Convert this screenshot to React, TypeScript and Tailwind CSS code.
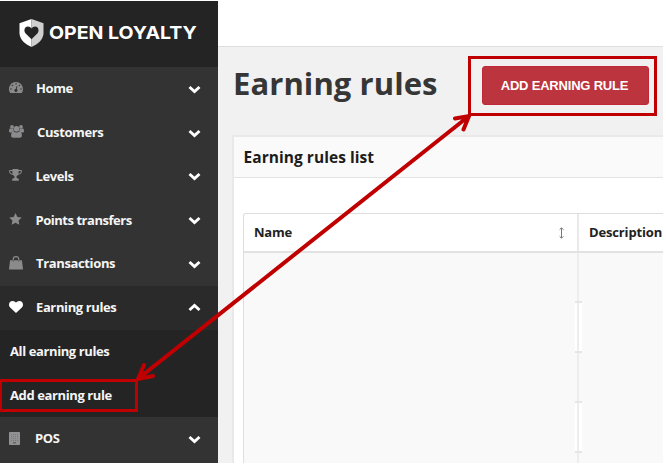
import React from "react";

type IconProps = { className?: string };

const Dashboard = () => (
  <svg width="14" height="12" viewBox="0 0 14 12" fill="#8b8b8d">
    <path
      fillRule="evenodd"
      d="M7 0a7 7 0 0 1 7 7c0 1.400-.4 2.700-1.100 3.800-.1.200-.2.200-.4.200H1.500c-.2 0-.3 0-.4-.2A7 7 0 0 1 7 0ZM7 1.200a.8.800 0 1 0 0 1.600.8.800 0 0 0 0-1.600ZM3.500 2.700a.8.800 0 1 0 0 1.600.8.800 0 0 0 0-1.600ZM10.500 2.700a.8.800 0 1 0 0 1.600.8.800 0 0 0 0-1.600ZM2 6.200a.8.800 0 1 0 0 1.600.8.800 0 0 0 0-1.600ZM12 6.200a.8.800 0 1 0 0 1.600.8.800 0 0 0 0-1.600ZM7.600 4l-.8 3a1.500 1.500 0 1 0 .9.200l.8-2.900Z"
    />
  </svg>
);

const Group = () => (
  <svg width="15" height="13" viewBox="0 0 15 13" fill="#8b8b8d">
    <circle cx="3" cy="1.900" r="1.900" />
    <circle cx="12" cy="1.900" r="1.900" />
    <circle cx="7.500" cy="3.800" r="2.900" />
    <path d="M1.200 3.400 3 4l1.200-.2c0 1.200.3 2 .9 2.700-.9 0-1.600.4-2.200 1H1.500C.6 7.500 0 7.100 0 6.300 0 5.200.2 3.400 1.200 3.400ZM13.800 3.400 12 4l-1.200-.2c0 1.200-.3 2-.9 2.700.9 0 1.600.4 2.200 1h1.400c.9 0 1.500-.4 1.500-1.200 0-1.100-.2-2.900-1.200-2.900Z" />
    <path d="M4.700 6.600c.8.700 1.700 1 2.800 1s2-.3 2.800-1c1.900 0 2.600 1.900 2.600 4.100 0 1.200-.8 2-2 2H4.100c-1.200 0-2-.8-2-2 0-2.200.7-4.100 2.600-4.100Z" />
  </svg>
);

const Trophy = () => (
  <svg width="13" height="12" viewBox="0 0 13 12" fill="#8b8b8d">
    <path
      fillRule="evenodd"
      d="M3.400 1V.8c0-.5.400-.8.800-.8h4.600c.4 0 .8.300.8.800V1h2.600c.4 0 .7.300.7.700v.9c0 1.700-1.800 3.300-4 3.400-.4.600-.9.900-1.300 1.100v1.900c.9.200 2.200.6 2.200 1.400v1c0 .2-.1.300-.3.300H3.500c-.2 0-.3-.1-.3-.3v-1c0-.8 1.300-1.200 2.200-1.400V7.100C5 6.900 4.500 6.600 4.100 6 1.900 5.900.1 4.300.1 2.600v-.9c0-.4.300-.7.700-.7ZM1.100 2v.6c0 1 1.100 2 2.500 2.300-.2-.8-.3-1.800-.3-2.900ZM9.700 2c0 1.100-.1 2.100-.3 2.900 1.400-.3 2.500-1.300 2.500-2.300V2Z"
    />
  </svg>
);

const Star = () => (
  <svg width="13" height="12" viewBox="0 0 13 12" fill="#8b8b8d">
    <path d="m6.500 0 1.900 3.900 4.300.6-3.100 3 .7 4.300-3.800-2-3.800 2 .7-4.300-3.100-3 4.300-.6Z" />
  </svg>
);

const Bag = () => (
  <svg width="14" height="14" viewBox="0 0 14 14">
    <path d="M4.200 4.500V3.400a2.800 2.800 0 0 1 5.600 0v1.100" fill="none" stroke="#8b8b8d" strokeWidth="1.100" />
    <path fill="#8b8b8d" d="M1.100 4.200h11.800l1.100 8.700c0 .3-.2.600-.5.600H.5c-.3 0-.5-.3-.5-.6Z" />
    <path d="M4.200 4.200v1.600M9.800 4.200v1.600" stroke="#5c5c5e" strokeWidth="1" />
  </svg>
);

const Heart = () => (
  <svg width="14" height="12" viewBox="0 0 14 12" fill="#fff">
    <path d="M7 12 1.400 6.700C.5 5.900 0 4.900 0 3.700 0 1.400 1.400 0 3.700 0 5.100 0 6.300.9 7 1.700 7.700.9 8.900 0 10.300 0 12.600 0 14 1.400 14 3.700c0 1.200-.5 2.200-1.400 3Z" />
  </svg>
);

const Building = () => (
  <svg width="11" height="13" viewBox="0 0 11 13">
    <rect width="11" height="13" rx=".7" fill="#919193" />
    <g fill="#78787a">
      {[2, 4, 6, 8].map((y) =>
        [2, 4, 6, 8].map((x) => <rect key={`${x}-${y}`} x={x} y={y} width="1" height="1" />),
      )}
      <rect x="4" y="10" width="3" height="1.500" fill="#666668" />
    </g>
  </svg>
);

const Chevron = ({ className }: IconProps) => (
  <svg width="13" height="9" viewBox="0 0 13 9" className={className}>
    <path d="m1.500 2 5 4.600L11.500 2" fill="none" stroke="#fff" strokeWidth="2.900" />
  </svg>
);

const SortIcon = () => (
  <svg width="7" height="12" viewBox="0 0 7 12" fill="none" stroke="#747a78">
    <path d="M3.500 1v10M1.600 2.700l1.900-1.900 1.900 1.900M1.600 9.300l1.900 1.900 1.900-1.900" />
  </svg>
);

const Shield = () => (
  <svg width="25" height="28" viewBox="0 0 25 28">
    <path d="M12.500 0 .5 4.200v10.500C1 20.500 5.700 25 12.500 28Z" fill="#fff" />
    <path d="m12.500 0 12 4.200v10.500c-.5 5.800-5.200 10.300-12 13.300Z" fill="#cfcfcf" />
    <path
      d="M12.500 20.300 6.900 14.800c-2.700-2.700-1.500-7.300 2-7.300 1.500 0 2.800.7 3.600 2 .8-1.300 2.100-2 3.600-2 3.500 0 4.700 4.600 2 7.300Z"
      fill="#242424"
    />
  </svg>
);

const items = [
  { label: "Home", icon: <Dashboard />, gap: "pl-[36px]", tracking: "tracking-[-0.4px]" },
  { label: "Customers", icon: <Group />, gap: "pl-[37px]", tracking: "tracking-[-0.38px]" },
  { label: "Levels", icon: <Trophy />, gap: "pl-[35.5px]", tracking: "tracking-[-0.4px]" },
  { label: "Points transfers", icon: <Star />, gap: "pl-[35.5px]", tracking: "tracking-[-0.47px]" },
  { label: "Transactions", icon: <Bag />, gap: "pl-[36px]", tracking: "tracking-[-0.36px]" },
];

function MenuRow({
  label,
  icon,
  gap,
  tracking,
  open,
}: {
  label: string;
  icon: React.ReactNode;
  gap: string;
  tracking: string;
  open?: boolean;
}) {
  return (
    <div className={`relative flex h-[43.8px] shrink-0 items-center ${gap} ${open ? "bg-[#2a2a2a]" : ""}`}>
      <span className="absolute left-[9px] flex h-full items-center pb-[2px]">{icon}</span>
      <span className={`whitespace-nowrap text-[13px] ${tracking}`}>{label}</span>
      <Chevron className={`mr-[17.5px] ml-auto ${open ? "rotate-180" : "mt-px"}`} />
    </div>
  );
}

export default function App() {
  return (
    <div className="relative h-[464px] w-[666px] overflow-hidden bg-white font-['Open_Sans','Noto_Sans',sans-serif] text-[#222]">
      <div className="flex h-[463px] w-[663px] overflow-hidden">
        <aside className="mt-px flex w-[218px] shrink-0 flex-col bg-[#333] font-bold text-[#f5f5f5]">
          <div className="flex h-[66px] shrink-0 items-center gap-[5px] bg-[#242424] pb-[2px] pl-[19px]">
            <Shield />
            <span className="origin-left scale-x-[1.085] whitespace-nowrap font-['Inter',sans-serif] text-[18px] font-bold leading-none text-white">
              OPEN LOYALTY
            </span>
          </div>
          {items.map((i) => (
            <MenuRow key={i.label} {...i} />
          ))}
          <MenuRow label="Earning rules" icon={<Heart />} gap="pl-[36px]" tracking="tracking-[-0.38px]" open />
          <div className="flex h-[87.5px] shrink-0 flex-col bg-[#242424] pl-[10px] text-[13px] tracking-[-0.39px]">
            <span className="flex h-[43.7px] items-center">All earning rules</span>
            <span className="flex h-[43.8px] items-center">Add earning rule</span>
          </div>
          <MenuRow label="POS" icon={<Building />} gap="pl-[35px]" tracking="tracking-[-0.4px]" />
        </aside>

        <main className="flex min-w-0 flex-1 flex-col bg-[#f1f1f1]">
          <div className="h-[47px] shrink-0 border-b border-[#dfdfdf] bg-white" />
          <div className="flex h-[88px] shrink-0 items-start pl-[15px]">
            <h1 className="w-[248.5px] whitespace-nowrap pt-[12px] text-[31px] font-bold leading-[48px] tracking-[0.08px] text-[#363636]">
              Earning rules
            </h1>
            <button className="mt-[19px] h-[39px] w-[167px] rounded-[3px] border border-[#c02837] bg-[#bc343d] pr-px font-['Liberation_Sans',Arial,sans-serif] text-[13px] font-bold tracking-[-0.2px] whitespace-nowrap text-white">
              ADD EARNING RULE
            </button>
          </div>
          <section className="ml-[14px] flex flex-1 flex-col border-t-2 border-l-2 border-[#e9e9e9] bg-white">
            <h2 className="flex h-[41px] shrink-0 items-center border-b border-[#e3e3e3] bg-[#fafafa] pt-px pl-[9.5px] text-[15.5px] font-bold tracking-[0.05px] text-[#1c1c1c]">
              Earning rules list
            </h2>
            <div className="mt-[35px] ml-[9px] flex flex-1 flex-col rounded-tl-[3px] border-t border-l border-[#dedede]">
              <div className="flex h-[39px] shrink-0 border-b-2 border-[#e2e2e2] text-[13px] font-bold">
                <div className="flex w-[335px] items-center justify-between border-r-2 border-[#e9e9e9] pr-[12px] pl-[10px]">
                  <span className="tracking-[-0.2px]">Name</span>
                  <SortIcon />
                </div>
                <span className="flex items-center pl-[10px] tracking-[-0.15px]">Description</span>
              </div>
              <div className="flex flex-1 bg-[#f9f9f9]">
                <div className="w-[331px]" />
                <div className="flex w-[7px] flex-col">
                  {[0, 1, 2, 3].map((n) => (
                    <div
                      key={n}
                      className={`flex h-[50px] shrink-0 border-b-2 border-[#e5e5e5] pl-[2px] ${n % 2 ? "bg-white" : ""}`}
                    >
                      <div className="w-[2px] bg-[#ededed]" />
                    </div>
                  ))}
                  <div className="ml-[2px] w-[2px] flex-1 bg-[#ededed]" />
                </div>
              </div>
            </div>
          </section>
        </main>
      </div>

      <div className="pointer-events-none absolute top-[379px] left-[-1px] h-[33px] w-[139px] border-[3px] border-[#c00000]" />
      <div className="pointer-events-none absolute top-[56px] left-[468px] h-[60px] w-[189px] border-[3px] border-[#c00000]" />
      <svg className="pointer-events-none absolute inset-0" width="666" height="464" fill="none" stroke="#c00000" strokeWidth="4" strokeLinecap="round">
        <path d="M139 378 469 116M144 365l-6 14 15-3M455 118.500l14-2.500-5.500 13.500" />
      </svg>
    </div>
  );
}
